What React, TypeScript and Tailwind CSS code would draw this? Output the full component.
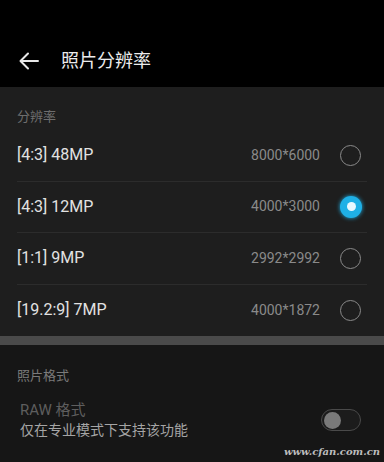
import React from "react";

const rows = [
  { label: "[4:3] 48MP", res: "8000*6000", sel: false },
  { label: "[4:3] 12MP", res: "4000*3000", sel: true },
  { label: "[1:1] 9MP", res: "2992*2992", sel: false },
  { label: "[19.2:9] 7MP", res: "4000*1872", sel: false },
];

export default function App() {
  return (
    <div
      className="w-[384px] h-[462px] overflow-hidden bg-[#151515] flex flex-col"
      style={{ fontFamily: '"Roboto", "Noto Sans CJK SC", sans-serif' }}
    >
      <div className="h-[87px] bg-black flex items-end pb-[14px] shrink-0">
        <div className="flex items-center h-[24px]">
          <svg width="20" height="18" viewBox="0 0 20 18" className="ml-[19px]" fill="none" stroke="#e8e8e8" strokeWidth="2" strokeLinecap="round" strokeLinejoin="round">
            <path d="M19 9H2M9 1.5L1.5 9L9 16.5" />
          </svg>
          <span className="ml-[22px] text-[18px] text-[#ececec] leading-none">照片分辨率</span>
        </div>
      </div>
      <div className="bg-[#1e1e1e] h-[249px] shrink-0 flex flex-col">
        <div className="h-[43px] shrink-0 pl-[17px] pt-[23px] text-[13px] leading-none text-[#6e6e6e]">分辨率</div>
        {rows.map((r, i) => (
          <div key={i} className={`h-[51.5px] shrink-0 mx-[17px] flex items-center ${i < 3 ? "border-b border-[#2c2c2c]" : ""}`}>
            <span className="text-[16px] text-[#e2e2e2] flex-1">{r.label}</span>
            <span className="text-[14px] text-[#8a8a8a] mr-[20px]">{r.res}</span>
            {r.sel ? (
              <span className="w-[22px] h-[22px] rounded-full bg-[#1fb0e6] flex items-center justify-center mr-[5px] shadow-[0_0_4px_#1fb0e6]">
                <span className="w-[9px] h-[9px] rounded-full bg-[#e8f8ff]" />
              </span>
            ) : (
              <span className="w-[21px] h-[21px] rounded-full border-[1.5px] border-[#8a8a8a] mr-[6px]" />
            )}
          </div>
        ))}
      </div>
      <div className="h-[9px] bg-[#4a4a4a] shrink-0" />
      <div className="flex-1 bg-[#161616] flex flex-col relative">
        <div className="pl-[17px] pt-[24px] text-[13px] text-[#7a7a7a] leading-none">照片格式</div>
        <div className="flex items-center pl-[20px] pr-[23px] mt-[18px]">
          <div className="flex-1 flex flex-col">
            <span className="text-[15px] text-[#5e5e5e] leading-[20px]">RAW 格式</span>
            <span className="text-[14px] text-[#a5a5a5] leading-[20px]">仅在专业模式下支持该功能</span>
          </div>
          <div className="w-[40px] h-[22px] rounded-full border border-[#4a4a4a] bg-[#1c1c1c] flex items-center pl-[2px]">
            <span className="w-[17px] h-[17px] rounded-full bg-[#7a7a7a]" />
          </div>
        </div>
        <span className="absolute right-[4px] bottom-[3px] text-[10px] italic font-bold text-[#bdbdbd]" style={{ fontFamily: '"DejaVu Serif", serif' }}>www.cfan.com.cn</span>
      </div>
    </div>
  );
}
